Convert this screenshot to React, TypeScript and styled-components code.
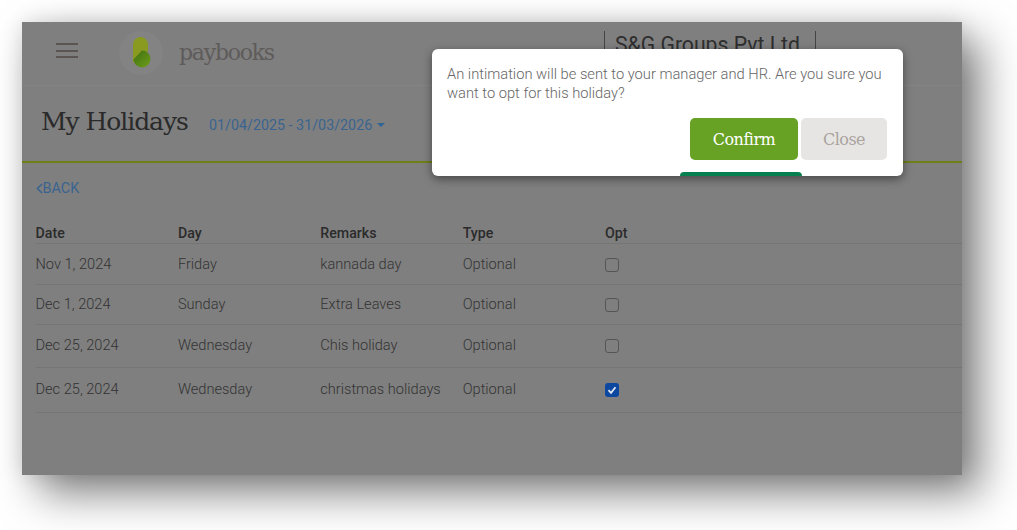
import React from 'react';
import styled, { createGlobalStyle } from 'styled-components';

const GlobalStyle = createGlobalStyle`
  html, body {
    margin: 0;
    padding: 0;
    background: #fff;
    font-family: Roboto, "Liberation Sans", sans-serif;
  }
`;

const Canvas = styled.div`
  width: 1017px;
  height: 530px;
  box-sizing: border-box;
  padding: 22px 55px 55px 22px;
  overflow: hidden;
`;

const Shadow = styled.div`
  width: 940px;
  height: 453px;
  box-shadow: 18px 18px 40px rgba(0, 0, 0, 0.5), 0 0 20px rgba(0, 0, 0, 0.12);
`;

const Frame = styled.div`
  position: relative;
  width: 940px;
  height: 453px;
  background: #7f7f7f;
  overflow: hidden;
`;

const TopBar = styled.header`
  height: 64px;
  box-sizing: border-box;
  display: flex;
  align-items: center;
  padding-left: 34px;
  border-bottom: 1px solid #848484;
`;

const Burger = styled.div`
  width: 22px;
  height: 15px;
  margin-top: -6px;
  display: flex;
  flex-direction: column;
  justify-content: space-between;

  span {
    display: block;
    height: 2px;
    background: #5a5553;
  }
`;

const LogoBadge = styled.div`
  width: 44px;
  height: 44px;
  margin-left: 41px;
  margin-top: -1px;
  border-radius: 50%;
  background: #838383;
  display: flex;
  align-items: center;
  justify-content: center;
`;

const BrandName = styled.div`
  margin-left: 16px;
  width: 94px;
  margin-top: -2px;
  font-family: "DejaVu Serif", serif;
  font-size: 22px;
  letter-spacing: -1.25px;
  color: #5e5b5a;
`;

const Company = styled.div`
  margin-left: 331px;
  height: 63px;
  box-sizing: border-box;
  padding-top: 9px;
`;

const CompanyName = styled.div`
  height: 30px;
  box-sizing: border-box;
  padding: 0 15px 0 10px;
  border-left: 1px solid #444;
  border-right: 1px solid #444;
  font-size: 21.2px;
  line-height: 28px;
  color: #2e2e2e;
  white-space: nowrap;
`;

const TitleBar = styled.div`
  height: 77px;
  box-sizing: border-box;
  display: flex;
  align-items: baseline;
  padding: 20px 0 0 19px;
  border-bottom: 2px solid #6f8018;
`;

const Title = styled.h1`
  margin: 0;
  width: 146px;
  font-family: "DejaVu Serif", serif;
  font-size: 25px;
  font-weight: 400;
  letter-spacing: -1.05px;
  line-height: 32px;
  color: #2a2a2a;
  white-space: nowrap;
`;

const Period = styled.div`
  margin-left: 22px;
  display: flex;
  align-items: center;
  font-size: 14.3px;
  font-weight: 400;
  color: #3a6490;
`;

const Caret = styled.span`
  margin-left: 5px;
  border-left: 4px solid transparent;
  border-right: 4px solid transparent;
  border-top: 4px solid #2f6496;
`;

const Content = styled.main`
  padding: 15px 0 0 13.5px;
`;

const BackLink = styled.a`
  display: flex;
  align-items: center;
  height: 20px;
  font-size: 14.4px;
  color: #3a6490;
`;

const Row = styled.div<{ $height: number }>`
  display: grid;
  grid-template-columns: repeat(4, 142.4px) 1fr;
  align-items: center;
  height: ${p => p.$height}px;
  box-sizing: border-box;
  padding-bottom: ${p => (p.$height > 41 ? 3 : 1)}px;
  border-bottom: 1px solid #757575;
  font-size: 14.6px;
  font-weight: 300;
  color: #333;
`;

const HeadRow = styled(Row)`
  margin-top: 14px;
  font-size: 14.2px;
  font-weight: 500;
  color: #2b2b2b;
  align-items: end;
  padding-bottom: 2px;
`;

const CheckBox = styled.span<{ $checked?: boolean }>`
  width: 14px;
  height: 14px;
  box-sizing: border-box;
  border: ${p => (p.$checked ? 'none' : '1.5px solid #555')};
  border-radius: 3px;
  background: ${p => (p.$checked ? '#0c47a0' : 'transparent')};
  display: flex;
  align-items: center;
  justify-content: center;
  margin-top: 2px;
`;

const Modal = styled.div`
  position: absolute;
  left: 410px;
  top: 27px;
  width: 471px;
  height: 127px;
  box-sizing: border-box;
  padding: 16px 16px 0 15px;
  background: #fff;
  border-radius: 6px;
  box-shadow: 0 3px 10px rgba(0, 0, 0, 0.45);
  overflow: hidden;
`;

const Message = styled.p`
  margin: 0;
  font-size: 14.7px;
  font-weight: 300;
  line-height: 19px;
  color: #666;
`;

const Actions = styled.div`
  display: flex;
  justify-content: flex-end;
  gap: 3px;
  margin-top: 15px;
`;

const ModalButton = styled.button<{ $primary?: boolean }>`
  height: 42px;
  width: ${p => (p.$primary ? 108 : 86)}px;
  border: none;
  padding: 0;
  border-radius: 5px;
  background: ${p => (p.$primary ? '#68a224' : '#e6e5e3')};
  color: ${p => (p.$primary ? '#fff' : '#aaa39e')};
  font-family: "DejaVu Serif", serif;
  font-size: 16px;
  letter-spacing: -0.5px;
`;

const PeekingButton = styled.div`
  position: absolute;
  left: 248px;
  bottom: 0;
  width: 122px;
  height: 4px;
  border-radius: 4px 4px 0 0;
  background: #07804f;
`;

const rows = [
  { date: 'Nov 1, 2024', day: 'Friday', remarks: 'kannada day', height: 41, checked: false },
  { date: 'Dec 1, 2024', day: 'Sunday', remarks: 'Extra Leaves', height: 40, checked: false },
  { date: 'Dec 25, 2024', day: 'Wednesday', remarks: 'Chis holiday', height: 43, checked: false },
  { date: 'Dec 25, 2024', day: 'Wednesday', remarks: 'christmas holidays', height: 45, checked: true },
];

const App: React.FC = () => (
  <>
    <GlobalStyle />
    <Canvas>
      <Shadow>
        <Frame>
          <TopBar>
            <Burger>
              <span />
              <span />
              <span />
            </Burger>
            <LogoBadge>
              <svg width="20" height="32" viewBox="0 0 20 32">
                <defs>
                  <linearGradient id="leaf" x1="0" y1="0" x2="1" y2="1">
                    <stop offset="0" stopColor="#3d6c10" />
                    <stop offset="1" stopColor="#6f9f1c" />
                  </linearGradient>
                </defs>
                <path d="M2 7.5a7.5 7.5 0 0 1 15 0V14L2 26z" fill="#8a9a20" />
                <path d="M2 23L11 13.5A8.5 8.5 0 1 1 2.5 22z" fill="url(#leaf)" />
              </svg>
            </LogoBadge>
            <BrandName>paybooks</BrandName>
            <Company>
              <CompanyName>S&amp;G Groups Pvt Ltd</CompanyName>
            </Company>
          </TopBar>
          <TitleBar>
            <Title>My Holidays</Title>
            <Period>
              01/04/2025 - 31/03/2026
              <Caret />
            </Period>
          </TitleBar>
          <Content>
            <BackLink>
              <svg width="7" height="11" viewBox="0 0 7 11">
                <path d="M6 1L1.5 5.5L6 10" fill="none" stroke="#3a6490" strokeWidth="1.6" />
              </svg>
              BACK
            </BackLink>
            <HeadRow $height={32}>
              <span>Date</span>
              <span>Day</span>
              <span>Remarks</span>
              <span>Type</span>
              <span>Opt</span>
            </HeadRow>
            {rows.map((r, i) => (
              <Row key={i} $height={r.height}>
                <span>{r.date}</span>
                <span>{r.day}</span>
                <span>{r.remarks}</span>
                <span>Optional</span>
                <CheckBox $checked={r.checked}>
                  {r.checked && (
                    <svg width="10" height="10" viewBox="0 0 10 10">
                      <path d="M1.5 5.2L4 7.8L8.5 2.2" fill="none" stroke="#e4e8f0" strokeWidth="1.8" />
                    </svg>
                  )}
                </CheckBox>
              </Row>
            ))}
          </Content>
          <Modal>
            <Message>
              An intimation will be sent to your manager and HR. Are you sure you want to opt for this holiday?
            </Message>
            <Actions>
              <ModalButton $primary>Confirm</ModalButton>
              <ModalButton>Close</ModalButton>
            </Actions>
            <PeekingButton />
          </Modal>
        </Frame>
      </Shadow>
    </Canvas>
  </>
);

export default App;
